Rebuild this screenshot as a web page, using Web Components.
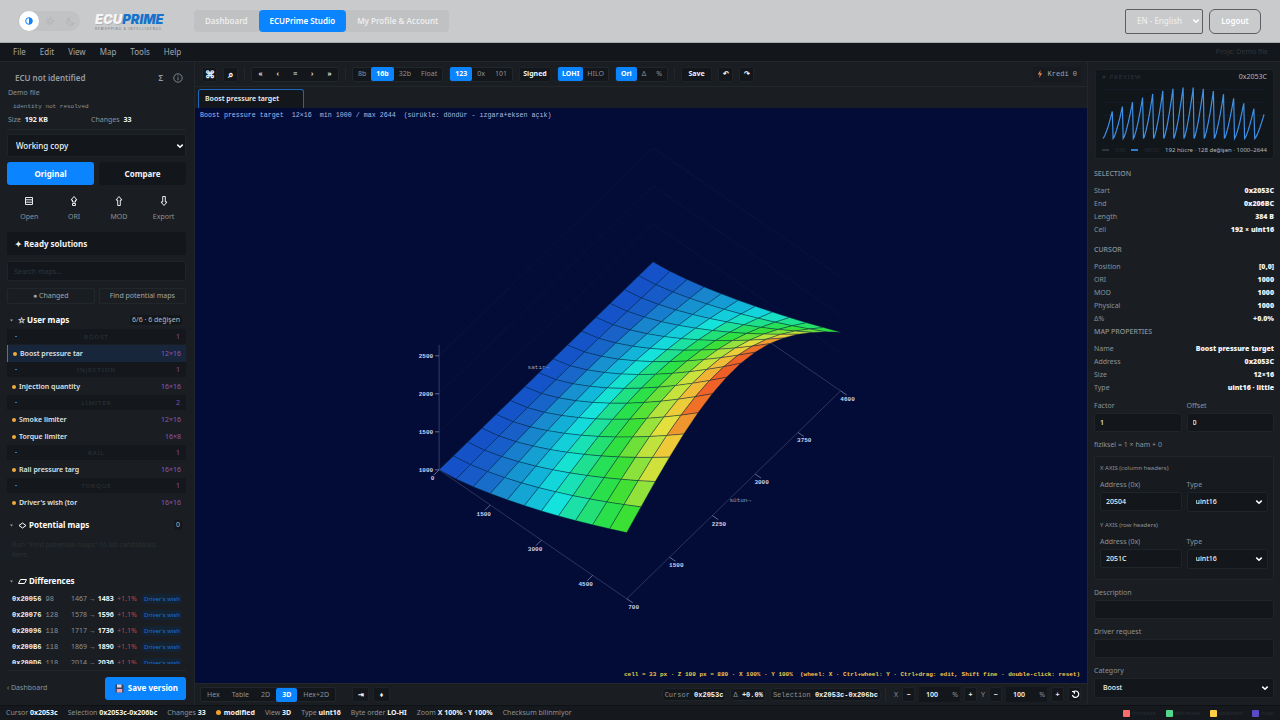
<!DOCTYPE html>
<html lang="en">
<head>
<meta charset="utf-8">
<title>ECUPrime Studio</title>
<style>
  :root {
    --blue: #0a84ff;
    --panel: #1a1e22;
    --deep: #13171b;
    --line: #22272b;
    --dim: #8b9198;
    --faint: #30353a;
    --ink: #f1f3f5;
    --mono: "Liberation Mono", "DejaVu Sans Mono", monospace;
  }
  html, body { margin: 0; height: 100%; background: var(--deep); }
  body { font: 7px/10px "Noto Sans", "Open Sans", sans-serif; color: var(--dim); }
</style>
</head>
<body>
<ecu-app></ecu-app>

<script>
const base = `
  *, *::before, *::after { box-sizing: border-box; }
  button, input, select { font: inherit; color: inherit; margin: 0; padding: 0; border: 0; background: none; border-radius: 2px; min-width: 0; }
  input::placeholder { color: var(--faint); opacity: 1; }
  select { appearance: none; background: var(--deep) no-repeat right 4px center / 8px 8px url("data:image/svg+xml,%3Csvg xmlns='http://www.w3.org/2000/svg' viewBox='0 0 8 8'%3E%3Cpath d='M1.3 2.6 4 5.3 6.7 2.6' fill='none' stroke='white' stroke-width='1.5'/%3E%3C/svg%3E"); }
  b { color: var(--ink); font-weight: 700; }
  svg { display: block; }
`;
function define(name, css, html) {
  const t = document.createElement('template');
  t.innerHTML = `<style>${base}${css}</style>${typeof html === 'string' ? html : ''}`;
  customElements.define(name, class extends HTMLElement {
    connectedCallback() {
      if (this.shadowRoot) return;
      const root = this.attachShadow({ mode: 'open' });
      root.append(t.content.cloneNode(true));
      if (typeof html === 'function') root.innerHTML += html(this);
    }
  });
}

/* Height model of the map: 12 columns by 16 rows, values 1000..2644 */
const COLS = 12, ROWS = 16;
function level(i, j) {
  const along = Math.pow(i / 11, 1.35);
  const edge = 0.53 - 0.06 * j / 15;
  return along * (edge + (1 - edge) * Math.sin(Math.PI * j / 15));
}

/* ---------- small shared parts ---------- */
define('seg-group', `
  :host { display: flex; align-items: center; height: 15px; background: var(--deep); border: 1px solid var(--line); border-radius: 2px; }
  button { flex: var(--seg-flex, none); height: 14px; padding: 0 var(--seg-pad, 5px); }
  button.on { background: var(--blue); color: #fff; font-weight: 700; }
`, el => el.getAttribute('items').split('|').map(s => {
  const on = s.startsWith('*');
  return `<button type="button" class="${on ? 'on' : ''}" aria-pressed="${on}">${on ? s.slice(1) : s}</button>`;
}).join(''));

define('tool-button', `
  :host { display: block; }
  button { display: grid; place-items: center; width: 100%; height: 15px; padding: 0 2px; background: var(--deep); border: 1px solid #1e2327; color: var(--ink); font-weight: 700; }
`, '<button type="button"><slot></slot></button>');

define('tool-sep', `:host { display: block; width: 1px; height: 14px; background: var(--line); }`, '');

define('kv-row', `
  :host { display: flex; justify-content: space-between; height: 13px; line-height: 13px; }
  b { font-weight: 900; }
`, el => `<span>${el.getAttribute('k')}</span><b><slot></slot></b>`);

define('text-field', `
  :host { display: block; }
  label { display: block; height: 12px; line-height: 10px; }
  input, select { display: block; width: 100%; height: 19px; padding: 0 5px; background-color: var(--deep); border: 1px solid #1f2428; color: var(--ink); font-weight: 500; }
  select { padding: 0 8px; height: 20px; }
`, el => {
  const label = el.getAttribute('label'), v = el.getAttribute('value') || '';
  return `<label for="f">${label}</label>` + (el.hasAttribute('choice')
    ? `<select id="f"><option>${v}</option></select>`
    : `<input id="f" value="${v}">`);
});

/* ---------- header ---------- */
define('site-header', `
  :host { display: flex; align-items: center; height: 43px; padding: 0 19px 0 18px; background: #c9cacc; border-bottom: 1px solid #a9abad; font-size: 8px; font-weight: 600; color: #eceded; }
  .theme { display: flex; align-items: center; width: 62px; height: 20px; border-radius: 10px; background: #c1c2c4; }
  .theme button { display: grid; place-items: center; width: 20px; height: 20px; border-radius: 10px; }
  .theme .on { background: #fff; margin: 0 1px; }
  .logo { width: 74px; margin: 0 25px 0 15px; display: block; text-decoration: none; }
  nav { display: flex; height: 22px; border-radius: 4px; background: #c0c1c3; }
  nav a { padding: 0 11px; line-height: 22px; border-radius: 4px; color: inherit; text-decoration: none; }
  nav a.on { background: var(--blue); color: #fff; }
  .right { margin-left: auto; display: flex; gap: 6px; }
  select, .right button { height: 25px; border: 1px solid #5d5f61; font-weight: 600; font-size: 8px; background-color: transparent; }
  select { width: 78px; padding: 0 11px; border-radius: 2px; background-position: right 2px center; font-weight: 500; }
  .right button { width: 52px; border-radius: 6px; color: #fff; }
`, `
  <div class="theme">
    <button type="button" class="on" aria-label="Auto theme"><svg width="8" height="8" viewBox="0 0 8 8"><circle cx="4" cy="4" r="3.3" fill="none" stroke="#0a84ff"/><path d="M4 .7a3.3 3.3 0 0 1 0 6.6z" fill="#0a84ff"/></svg></button>
    <button type="button" aria-label="Light theme"><svg width="10" height="10" viewBox="0 0 10 10" fill="none" stroke="#acaeb0" stroke-width=".8"><circle cx="5" cy="5" r="2"/><path d="M5 .6v1.6M5 7.8v1.6M.6 5h1.6M7.8 5h1.6M1.9 1.9l1 1M7.1 7.1l1 1M8.1 1.9l-1 1M2.9 7.1l-1 1"/></svg></button>
    <button type="button" aria-label="Dark theme"><svg width="9" height="9" viewBox="0 0 9 9" fill="none" stroke="#acaeb0" stroke-width=".8"><path d="M3.3 1A3.7 3.7 0 1 0 8 6 3.9 3.9 0 0 1 3.3 1z"/></svg></button>
  </div>
  <a class="logo" href="#" aria-label="ECUPrime"><svg width="74" height="20" viewBox="0 0 74 20" font-family="Inter, sans-serif">
    <text x="1" y="14" font-size="13" font-weight="900" font-style="italic" fill="#b0b3b6">ECU</text>
    <text x="0" y="13" font-size="13" font-weight="900" font-style="italic" fill="#f4f5f6">ECU<tspan fill="#1672cb">PRIME</tspan></text>
    <text x="0" y="19" font-size="3" font-weight="600" letter-spacing="1" fill="#85888b">REMAPPING &amp; INTELLIGENCE</text>
  </svg></a>
  <nav><a href="#">Dashboard</a><a href="#" class="on">ECUPrime Studio</a><a href="#">My Profile &amp; Account</a></nav>
  <div class="right"><select aria-label="Language"><option>EN - English</option></select><button type="button">Logout</button></div>
`);

define('menu-bar', `
  :host { display: flex; align-items: center; height: 19px; padding: 0 12px 0 13px; gap: 14px; border-bottom: 1px solid var(--line); color: #a3a8ad; }
  button { font-size: 8px; }
  span { margin-left: auto; color: var(--faint); }
`, ['File', 'Edit', 'View', 'Map', 'Tools', 'Help'].map(m => `<button type="button">${m}</button>`).join('') + '<span>Proje: Demo file</span>');

/* ---------- left sidebar ---------- */
define('map-group', `
  :host { display: block; }
  header { display: flex; align-items: center; justify-content: space-between; height: 15px; margin-bottom: 1px; padding: 0 6px 0 8px; background: #14181c; color: #2f3439; font-size: 6px; letter-spacing: 1px; }
  header i { width: 2px; height: 1px; background: #2b7cc4; }
  header em { font-style: normal; font-size: 7px; letter-spacing: 0; color: #8a4bb0; }
`, el => `<header><i></i><span>${el.getAttribute('name')}</span><em>${el.getAttribute('count')}</em></header><slot></slot>`);

define('map-item', `
  :host { display: block; }
  button { display: flex; align-items: center; width: 100%; height: 17px; padding: 0 5px 0 5px; color: #dfe2e5; font-weight: 600; border-radius: 0; }
  :host([active]) button { background: #17263b; border-left: 1px solid var(--blue); }
  i { width: 4px; height: 4px; border-radius: 2px; background: #f0ab3c; margin-right: 3px; }
  em { margin-left: auto; font-style: normal; font-weight: 400; color: #8f55b5; }
`, el => `<button type="button"><i></i><slot></slot><em>${el.getAttribute('size')}</em></button>`);

define('section-head', `
  :host { display: flex; align-items: center; height: 18px; padding: 0 4px 0 3px; font-size: 8px; font-weight: 700; color: #fff; }
  svg { margin-right: 5px; }
  .n { margin-left: auto; font-size: 7px; font-weight: 400; color: #b5babf; background: var(--deep); padding: 0 2px; border-radius: 3px; }
`, el => `<svg width="3" height="3" viewBox="0 0 3 3"><path d="M0 .5h3L1.5 2.5z" fill="#9aa0a6"/></svg><slot></slot>${el.hasAttribute('note') ? `<span class="n">${el.getAttribute('note')}</span>` : ''}`);

const diffs = [['0x20056', 98, 1467, 1483], ['0x20076', 128, 1578, 1596], ['0x20096', 118, 1717, 1736], ['0x200B6', 118, 1869, 1890], ['0x200D6', 118, 2014, 2036]];
define('diff-table', `
  :host { display: block; }
  table { width: 100%; border-collapse: collapse; table-layout: fixed; }
  td { height: 16px; padding: 0; white-space: nowrap; }
  td:first-child { width: 64px; padding-left: 5px; font: 7px/10px var(--mono); }
  td:nth-child(2) { width: 46px; }
  td:nth-child(3) { width: 25px; color: #b84552; }
  a { color: #1d72c9; background: #142334; font-size: 6px; line-height: 9px; text-decoration: none; padding: 1px 2px; border-radius: 3px; }
`, `<table>${diffs.map(d => `<tr><td><b>${d[0]}</b> ${d[1]}</td><td>${d[2]} → <b>${d[3]}</b></td><td>+1.1%</td><td><a href="#">Driver's wish</a></td></tr>`).join('')}</table>`);

define('side-bar', `
  :host { display: flex; flex-direction: column; min-height: 0; padding: 7px 8px 0 7px; background: var(--panel); border-right: 1px solid var(--line); }
  .title { display: flex; align-items: center; height: 18px; padding: 0 3px 0 8px; font-size: 8px; font-weight: 600; color: #969ca2; }
  .title span { flex: 1; }
  .title button { margin-left: 10px; }
  .line { height: 12px; line-height: 12px; padding-left: 1px; }
  .id { font-family: var(--mono); font-size: 6px; height: 14px; line-height: 16px; padding-left: 6px; }
  .stat { display: grid; grid-template-columns: 83px 1fr; height: 17px; padding: 2px 0 0 1px; border-bottom: 1px solid var(--line); }
  .stat b { margin-left: 2px; }
  .work { height: 23px; margin-top: 4px; padding: 0 8px; flex: none; border: 1px solid #1f2428; color: var(--ink); font-size: 8px; font-weight: 500; background-position: right 1px center; }
  .pair { display: grid; grid-template-columns: 1fr 1fr; gap: 5px; }
  .mode { margin-top: 5px; }
  .mode button { height: 23px; border-radius: 3px; font-size: 8px; font-weight: 700; color: var(--ink); background: var(--deep); }
  .mode .on { background: var(--blue); color: #fff; }
  .files { display: grid; grid-template-columns: repeat(4, 1fr); margin-top: 10px; }
  .files button { display: grid; justify-items: center; gap: 4px; height: 28px; line-height: 10px; }
  .files svg { width: 12px; height: 12px; fill: none; stroke: #e8eaec; stroke-width: 1; }
  .ready { flex: none; height: 23px; margin-top: 9px; padding: 0 8px; text-align: left; background: var(--deep); color: var(--ink); font-size: 8px; font-weight: 700; }
  .search { flex: none; height: 20px; margin-top: 6px; padding: 0 6px; background: var(--deep); border: 1px solid #1f2428; }
  .find { margin: 7px 0; gap: 4px; }
  .find button { height: 16px; border: 1px solid var(--line); color: #a0a5aa; }
  .list { flex: 1 1 0; min-height: 0; overflow: hidden; }
  .list .pot { margin-top: 5px; }
  .empty { margin: 6px 8px 10px 5px; height: 22px; color: #2a2f33; }
  diff-table { margin-top: 1px; }
  section-head svg { width: 9px; height: 9px; margin-right: 2px; fill: none; stroke: #fff; }
  footer { display: flex; justify-content: space-between; align-items: center; height: 35px; margin-top: 6px; border-top: 1px solid var(--line); }
  footer a { color: inherit; text-decoration: none; }
  footer button { display: flex; align-items: center; gap: 4px; height: 23px; padding: 0 8px 0 10px; background: var(--blue); color: #fff; font-size: 8px; font-weight: 700; border-radius: 3px; }
`, `
  <div class="title"><span>ECU not identified</span><button type="button">Σ</button><button type="button" aria-label="Info"><svg width="10" height="10" viewBox="0 0 10 10" fill="none" stroke="#969ca2" stroke-width=".8"><circle cx="5" cy="5" r="4.2"/><path d="M5 4.3v3M5 2.4v1"/></svg></button></div>
  <div class="line">Demo file</div>
  <div class="id">identity not resolved</div>
  <div class="stat"><span>Size <b>192 KB</b></span><span>Changes <b>33</b></span></div>
  <select class="work" aria-label="Version"><option>Working copy</option></select>
  <div class="pair mode"><button type="button" class="on">Original</button><button type="button">Compare</button></div>
  <div class="files">
    <button type="button"><svg viewBox="0 0 12 12"><path d="M2.5 2.5h7v7h-7zM2.5 4.8h7M2.5 7.2h7"/></svg>Open</button>
    <button type="button"><svg viewBox="0 0 12 12"><path d="M6 1.5 9 5H7.5v2h-3V5H3zM4.5 8.5h3v2h-3z"/></svg>ORI</button>
    <button type="button"><svg viewBox="0 0 12 12"><path d="M6 1.5 9 5H7.3v5.5H4.7V5H3z"/></svg>MOD</button>
    <button type="button"><svg viewBox="0 0 12 12"><path d="M6 10.5 9 7H7.3V1.5H4.7V7H3z"/></svg>Export</button>
  </div>
  <button type="button" class="ready">✦ Ready solutions</button>
  <input class="search" type="search" aria-label="Search maps" placeholder="Search maps...">
  <div class="pair find"><button type="button">● Changed</button><button type="button">Find potential maps</button></div>
  <div class="list">
    <section-head note="6/6 · 6 değişen">☆ User maps</section-head>
    <map-group name="BOOST" count="1"><map-item active size="12×16">Boost pressure tar</map-item></map-group>
    <map-group name="INJECTION" count="1"><map-item size="16×16">Injection quantity</map-item></map-group>
    <map-group name="LIMITER" count="2"><map-item size="12×16">Smoke limiter</map-item><map-item size="16×8">Torque limiter</map-item></map-group>
    <map-group name="RAIL" count="1"><map-item size="16×16">Rail pressure targ</map-item></map-group>
    <map-group name="TORQUE" count="1"><map-item size="16×16">Driver's wish (tor</map-item></map-group>
    <section-head class="pot" note="0"><svg viewBox="0 0 9 9"><path d="M4.5 2 8 4.5 4.5 7 1 4.5z"/></svg>Potential maps</section-head>
    <div class="empty">Run "Find potential maps" to list candidates<br>here.</div>
    <section-head><svg viewBox="0 0 9 9"><path d="M2.5 2.5h6l-2 4h-6z"/></svg>Differences</section-head>
    <diff-table></diff-table>
  </div>
  <footer><a href="#">‹ Dashboard</a><button type="button"><svg width="9" height="9" viewBox="0 0 9 9"><path d="M.5.5h7l1 1v7h-8z" fill="#3b3f58"/><path d="M2 .5h4.5v3H2z" fill="#d9dbe6"/><path d="M1.8 5h5.4v3.5H1.8z" fill="#e7a3b9"/></svg>Save version</button></footer>
`);

/* ---------- centre column ---------- */
define('tool-bar', `
  :host { display: flex; align-items: center; gap: 6px; height: 25px; padding: 0 6px 0 7px; background: var(--panel); border-bottom: 1px solid var(--line); }
  .sq { width: 15px; }
  .big { font-size: 10px; }
  .nav { --seg-pad: 0; --seg-flex: 1; width: 88px; color: var(--ink); font-weight: 600; }
  .ord { --seg-pad: 4px; }
  .save { width: 31px; }
  .signed { width: 32px; }
  .credit { margin-left: auto; display: flex; align-items: center; gap: 5px; height: 15px; padding: 0 4px; font-family: var(--mono); color: #a0a5aa; background: #171b1f; }
`, `
  <tool-button class="sq"><span class="big">⌘</span></tool-button><tool-button class="sq"><span class="big">⌕</span></tool-button><tool-sep></tool-sep>
  <seg-group class="nav" items="«|‹|≡|›|»"></seg-group><tool-sep></tool-sep>
  <seg-group items="8b|*16b|32b|Float"></seg-group>
  <seg-group items="*123|0x|101"></seg-group>
  <tool-button class="signed">Signed</tool-button>
  <seg-group class="ord" items="*LOHI|HILO"></seg-group>
  <seg-group items="*Ori|Δ|%"></seg-group><tool-sep></tool-sep>
  <tool-button class="save">Save</tool-button><tool-button class="sq">↶</tool-button><tool-button class="sq">↷</tool-button>
  <div class="credit"><svg width="6" height="8" viewBox="0 0 6 8"><path d="M3.6 0 .8 4.4h2L2 8l3.2-4.8h-2z" fill="#e8834f"/></svg>Kredi 0</div>
`);

define('tab-strip', `
  :host { display: flex; align-items: flex-end; height: 21px; padding-left: 3px; background: var(--panel); }
  button { height: 19px; width: 106px; padding: 0 6px; text-align: left; color: var(--ink); font-weight: 600; background: var(--deep); border: 1px solid #1a66b8; border-bottom: 0; border-radius: 3px 3px 0 0; }
`, '<button type="button" role="tab" aria-selected="true">Boost pressure target</button>');

/* Height-coloured surface, drawn as an oblique projection in a 1338 x 863 field */
const stops = [[0, 20, 78, 200], [.06, 24, 96, 200], [.12, 24, 138, 206], [.2, 18, 178, 216], [.285, 20, 226, 220], [.385, 32, 224, 134], [.47, 40, 224, 76], [.545, 60, 224, 52], [.62, 138, 226, 60], [.7, 200, 226, 60], [.75, 232, 222, 60], [.8, 240, 196, 56], [.85, 240, 150, 46], [.9, 240, 110, 40], [1, 240, 66, 36]];
function ramp(v) {
  let k = 1;
  while (k < stops.length - 1 && stops[k][0] < v) k++;
  const a = stops[k - 1], b = stops[k], t = Math.max(0, Math.min(1, (v - a[0]) / (b[0] - a[0])));
  return `rgb(${[1, 2, 3].map(n => Math.round(a[n] + (b[n] - a[n]) * t)).join()})`;
}
function surface() {
  const at = (i, j, h = 0) => [366 + 25.6 * i + 21.4 * j, 543 + 17.6 * i - 20.8 * j - 187.5 * h];
  const pt = p => p.map(n => n.toFixed(1)).join(' ');
  const seg = (a, b, c, w = 1) => `<path d="M${pt(a)}L${pt(b)}" stroke="${c}" stroke-width="${w}"/>`;
  const axis = '#343b66', faint = '#0e173f';
  let s = '';
  for (let k = 1; k <= 3; k++) {
    const h = k * 500 / 1644;
    s += seg(at(0, 0, h), at(0, 15, h), faint) + seg(at(0, 15, h), at(11, 15, h), faint);
  }
  s += seg(at(0, 0), at(11, 0), axis, 1.3) + seg(at(11, 0), at(11, 15), axis, 1.3) + seg(at(0, 15), at(11, 15), axis, 1.3) + seg(at(0, 0), at(0, 0, 1), axis, 1.5);
  const cells = [];
  for (let i = 0; i < COLS - 1; i++) for (let j = 0; j < ROWS - 1; j++) cells.push([i, j, at(i, j)[1]]);
  cells.sort((a, b) => a[2] - b[2]);
  for (const [i, j] of cells) {
    const q = [[i, j], [i + 1, j], [i + 1, j + 1], [i, j + 1]];
    const avg = q.reduce((n, c) => n + level(...c), 0) / 4;
    s += `<path d="M${q.map(c => pt(at(...c, level(...c)))).join('L')}Z" fill="${ramp(avg)}" stroke="#06283f" stroke-opacity=".6" stroke-width="1"/>`;
  }
  const label = (x, y, t, a = 'middle') => `<text x="${x.toFixed(0)}" y="${y.toFixed(0)}" text-anchor="${a}">${t}</text>`;
  const tick = '#9299b8';
  for (let k = 0; k < 4; k++) {
    const [x, y] = at(0, 0, k * 500 / 1644);
    s += seg([x - 6, y], [x, y], tick) + label(x - 9, y + 3, 1000 + 500 * k, 'end');
  }
  ['0', '1500', '3000', '4500'].forEach((t, k) => {
    const [x, y] = at(3 * k, 0);
    s += seg([x, y], [x - 8, y + 8], tick) + label(x - 10, y + 16, t);
  });
  ['700', '1500', '2250', '3000', '3750', '4600'].forEach((t, k) => {
    const [x, y] = at(11, 3 * k);
    s += seg([x, y], [x + 9, y + 6], tick) + label(x + 10, y + 15, t);
  });
  return s + `<g class="names">${label(515, 391, 'satır→')}${label(818, 592, 'sütun→')}</g>`;
}
define('surface-plot', `
  :host { display: block; min-height: 0; background: #020c36; overflow: hidden; }
  svg { width: 100%; height: 100%; }
  text { font-family: "Liberation Mono", monospace; font-size: 9px; font-weight: 700; fill: #ccd3ee; white-space: pre; }
  .names text { font-weight: 400; fill: #98a0c0; }
  .caption { font-size: 10px; font-weight: 400; fill: #a9b8e6; }
  .hint { fill: #f2c94c; }
`, `<svg viewBox="0 0 1338 863" role="img" aria-label="3D surface of the boost pressure target map" fill="none">${surface()}
  <text class="caption" x="7" y="14">Boost pressure target  12×16  min 1000 / max 2644  (sürükle: döndür - ızgara+eksen açık)</text>
  <text class="hint" x="1328" y="853" text-anchor="end">cell = 33 px · Z 100 px = 880 · X 100% · Y 100%  (wheel: X · Ctrl+wheel: Y · Ctrl+drag: edit, Shift fine · double-click: reset)</text>
</svg>`);

define('view-bar', `
  :host { display: flex; align-items: center; gap: 4px; height: 22px; padding: 0 6px 0 5px; background: var(--panel); border-top: 1px solid var(--line); }
  .views { --seg-pad: 6px; margin-right: 12px; }
  .sq { width: 17px; }
  .step { width: 13px; }
  .pill { height: 13px; padding: 0 2px; line-height: 12px; font-family: var(--mono); background: var(--deep); border: 1px solid #1f2428; border-radius: 4px; }
  .gap { flex: 1; }
  .axis { padding-left: 4px; }
  label { display: flex; align-items: center; height: 15px; background: var(--deep); }
  input { width: 26px; text-align: center; color: var(--ink); font-weight: 600; }
  label span { width: 15px; padding-right: 2px; text-align: right; }
`, `
  <seg-group class="views" items="Hex|Table|2D|*3D|Hex+2D"></seg-group>
  <tool-button class="sq">⇥</tool-button><tool-button class="sq">♦</tool-button>
  <div class="gap"></div>
  <span class="pill">Cursor <b>0x2053c</b></span><span class="pill">Δ <b>+0.0%</b></span><span class="pill">Selection <b>0x2053c-0x206bc</b></span>
  <tool-sep></tool-sep>
  <span class="axis">X</span><tool-button class="step">−</tool-button><label><input aria-label="X zoom" value="100"><span>%</span></label><tool-button class="step">+</tool-button>
  <span>Y</span><tool-button class="step">−</tool-button><label><input aria-label="Y zoom" value="100"><span>%</span></label><tool-button class="step">+</tool-button>
  <tool-button class="step"><svg width="9" height="9" viewBox="0 0 9 9" fill="none" stroke="#fff" stroke-width="1.2"><path d="M2 2.2A3.2 3.2 0 1 1 1.4 5M1 1.5h2.4v2.3"/></svg></tool-button>
`);

/* ---------- right inspector ---------- */
function wave() {
  const p = [];
  for (let j = 0; j < ROWS; j++) for (let i = 0; i < COLS; i++) p.push(`${(7 + 161 * (j * 12 + i) / 191).toFixed(1)} ${(56 - 51 * level(i, j)).toFixed(1)}`);
  return 'M' + p.join('L');
}
define('wave-preview', `
  :host { display: flex; flex-direction: column; height: 90px; margin: 0 0 10px 1px; padding: 2px 6px 3px; background: #11161b; border: 1px solid #1d2226; border-radius: 3px; }
  header, footer { display: flex; align-items: center; justify-content: space-between; height: 10px; color: #b2b7bc; }
  header span { color: var(--faint); font-size: 6px; letter-spacing: 1px; }
  svg { flex: 1; margin: 0 -6px; }
  footer { font-size: 6px; }
  footer i { width: 7px; height: 2px; background: var(--faint); }
  footer i.m { background: #2f7fd0; }
  footer span { color: #262b30; }
`, `<header><span># PREVIEW</span>0x2053C</header>
  <svg viewBox="0 0 177 62" fill="none"><path d="M8 7h161M8 20h161M8 33h161M8 46h161" stroke="#15202d" stroke-width=".6"/><path d="${wave()}" stroke="#3f90e6" stroke-width="1.2"/></svg>
  <footer><i></i><span>ORI</span><i class="m"></i><span>MOD</span>192 hücre · 128 değişen · 1000–2644</footer>`);

define('data-inspector', `
  :host { display: block; min-height: 0; overflow: hidden; padding: 7px 6px 0; background: var(--panel); border-left: 1px solid var(--line); }
  h2 { margin: 9px 0 5px; font-size: 7px; line-height: 10px; font-weight: 500; color: #8b9198; }
  h2.tight { margin: 2px 0 5px; }
  .two { display: grid; grid-template-columns: 1fr 1fr; gap: 5px; }
  .mt { margin-top: 7px; }
  .formula { margin: 8px 0 6px; }
  .axes { padding: 6px 5px 10px; border: 1px solid #20252a; background: #171b1f; border-radius: 2px; }
  h3 { margin: 0 0 7px; font-size: 6px; line-height: 10px; font-weight: 400; }
  h3 + .two + h3 { margin-top: 8px; }
  .block { margin-top: 8px; }
`, `
  <wave-preview></wave-preview>
  <h2>SELECTION</h2>
  <kv-row k="Start">0x2053C</kv-row><kv-row k="End">0x206BC</kv-row><kv-row k="Length">384 B</kv-row><kv-row k="Cell">192 × uint16</kv-row>
  <h2>CURSOR</h2>
  <kv-row k="Position">[0,0]</kv-row><kv-row k="ORI">1000</kv-row><kv-row k="MOD">1000</kv-row><kv-row k="Physical">1000</kv-row><kv-row k="Δ%">+0.0%</kv-row>
  <h2 class="tight">MAP PROPERTIES</h2>
  <kv-row k="Name">Boost pressure target</kv-row><kv-row k="Address">0x2053C</kv-row><kv-row k="Size">12×16</kv-row><kv-row k="Type">uint16 · little</kv-row>
  <div class="two mt"><text-field label="Factor" value="1"></text-field><text-field label="Offset" value="0"></text-field></div>
  <div class="formula">fiziksel = 1 × ham + 0</div>
  <div class="axes">
    <h3>X AXIS (column headers)</h3>
    <div class="two"><text-field label="Address (0x)" value="20504"></text-field><text-field choice label="Type" value="uint16"></text-field></div>
    <h3>Y AXIS (row headers)</h3>
    <div class="two"><text-field label="Address (0x)" value="2051C"></text-field><text-field choice label="Type" value="uint16"></text-field></div>
  </div>
  <text-field class="block" label="Description"></text-field>
  <text-field class="block" label="Driver request"></text-field>
  <text-field class="block" choice label="Category" value="Boost"></text-field>
`);

define('status-bar', `
  :host { display: flex; align-items: center; gap: 10px; height: 15px; padding: 0 6px; background: #15191d; border-top: 1px solid #0f1215; white-space: nowrap; }
  .dot { display: inline-block; width: 5px; height: 5px; border-radius: 3px; background: #f0a030; margin-right: 3px; }
  .key { display: flex; align-items: center; gap: 2px; color: #272c30; font-size: 6px; }
  .key i { width: 7px; height: 7px; border-radius: 1px; }
  .first { margin-left: auto; }
`, `
  <span>Cursor <b>0x2053c</b></span><span>Selection <b>0x2053c-0x206bc</b></span><span>Changes <b>33</b></span><span><i class="dot"></i><b>modified</b></span><span>View <b>3D</b></span><span>Type <b>uint16</b></span><span>Byte order <b>LO-HI</b></span><span>Zoom <b>X 100% · Y 100%</b></span><span>Checksum bilinmiyor</span>
  <span class="key first"><i style="background:#ff6b6b"></i>increase</span><span class="key"><i style="background:#51d88a"></i>decrease</span><span class="key"><i style="background:#ffd043"></i>selected</span><span class="key"><i style="background:#5b49c8"></i>map</span>
`);

define('ecu-app', `
  :host { display: flex; flex-direction: column; height: 100vh; min-height: 640px; }
  main { flex: 1; min-height: 0; display: grid; grid-template-columns: 195px minmax(0, 1fr) 193px; grid-template-rows: minmax(0, 1fr); }
  section { display: grid; grid-template-rows: auto auto minmax(0, 1fr) auto; min-height: 0; }
`, `
  <site-header></site-header><menu-bar></menu-bar>
  <main><side-bar></side-bar><section><tool-bar></tool-bar><tab-strip></tab-strip><surface-plot></surface-plot><view-bar></view-bar></section><data-inspector></data-inspector></main>
  <status-bar></status-bar>
`);
</script>
</body>
</html>
